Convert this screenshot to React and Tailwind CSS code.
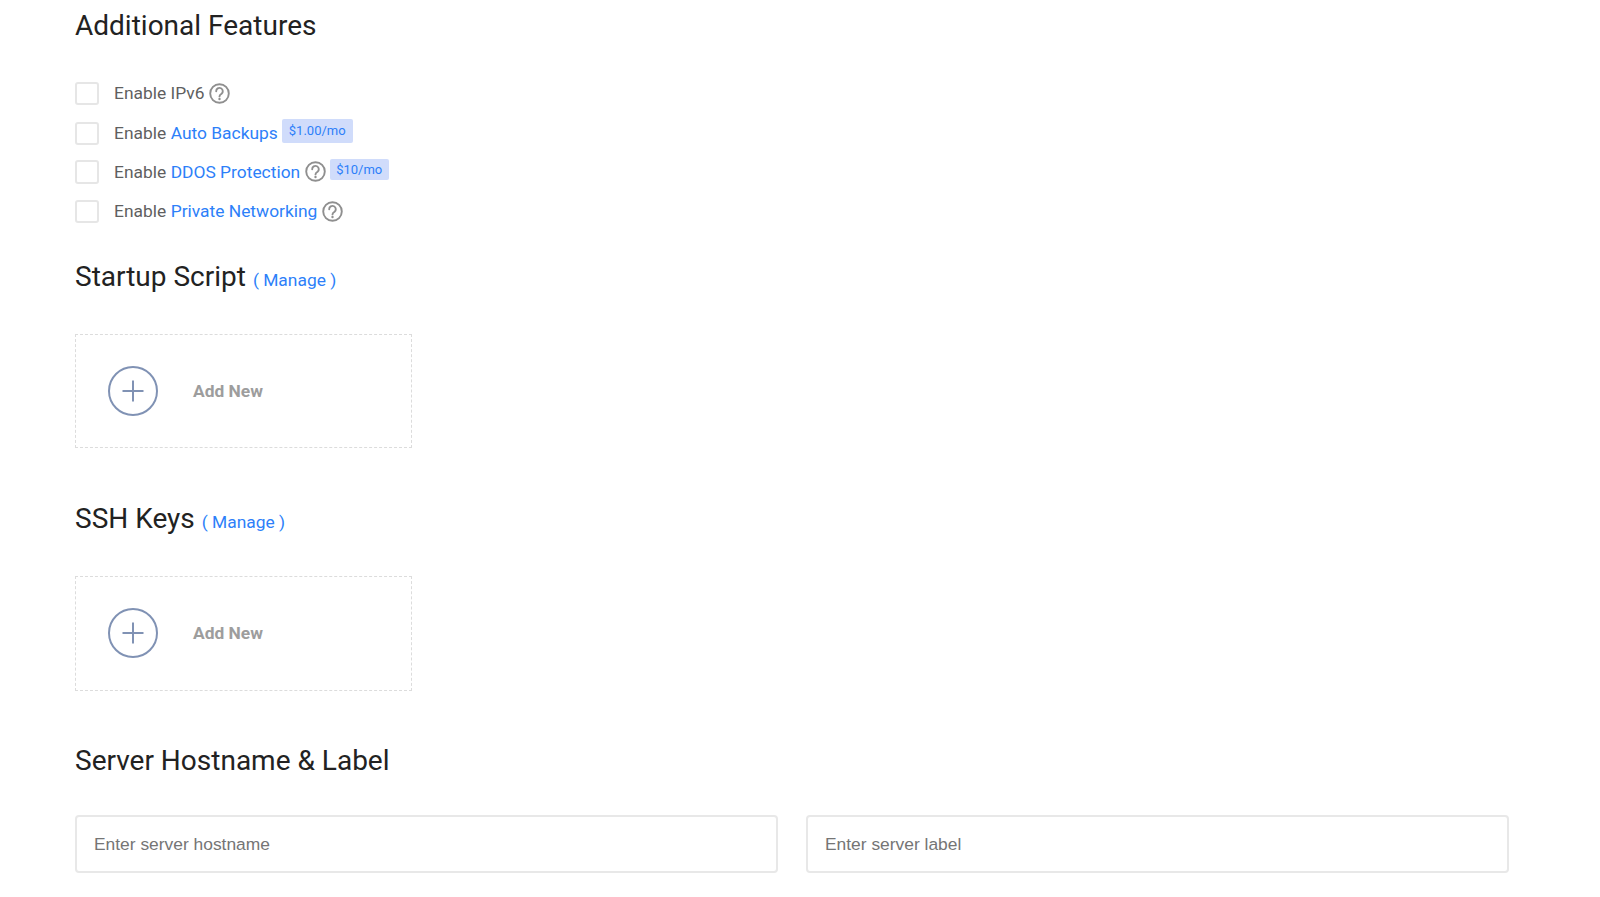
const Help = () => (
  <svg width="21" height="21" viewBox="0 0 21 21" fill="none" className="-mt-px ml-[4.5px] shrink-0">
    <circle cx="10.5" cy="10.5" r="9.3" stroke="#8f8f8f" strokeWidth="1.9" />
    <path d="M7.2 8.3a3.3 3.3 0 1 1 5.2 2.6c-1.2.8-1.9 1.2-1.9 2.5" stroke="#8f8f8f" strokeWidth="1.9" strokeLinecap="round" />
    <circle cx="10.5" cy="16" r="1.2" fill="#8f8f8f" />
  </svg>
)

const Badge = ({ children, className }) => (
  <span className={'ml-[4px] flex items-center rounded-[2px] bg-[#d0dcfb] text-[13px] text-[#2d7ff9] ' + className}>{children}</span>
)

const Feature = ({ className, children }) => (
  <div className={'flex h-[23px] items-center ' + className}>
    <span className="mr-[15.5px] h-[23.5px] w-[23.5px] shrink-0 rounded-[3px] border-2 border-[#e6e6e6] bg-white" />
    <span className="flex items-center text-[17.4px] text-[#5f5f5f]">{children}</span>
  </div>
)

const Link = ({ children }) => <span className="ml-[4.5px] text-[#2d7ff9]">{children}</span>

const AddNew = ({ className, iconClass }) => (
  <div className={'flex w-[337px] items-center border border-dashed border-[#dcdcdc] pl-[32px] ' + className}>
    <svg width="50" height="50" viewBox="0 0 50 50" fill="none" className={'shrink-0 ' + iconClass}>
      <circle cx="25" cy="25" r="24" stroke="#8092b4" strokeWidth="2" />
      <path d="M25 14.5v21M14.5 25h21" stroke="#8092b4" strokeWidth="2" />
    </svg>
    <span className="ml-[35px] text-[17.4px] font-bold text-[#9d9d9d]">Add New</span>
  </div>
)

export default function App() {
  return (
    <div className="h-[897px] overflow-hidden bg-white pl-[75px] pr-[91px] font-['Roboto',sans-serif]">
      <h2 className="h-[50px] text-[28px] leading-[52px] text-[#222]">Additional Features</h2>

      <div className="mt-[32px]">
        <Feature>
          Enable IPv6 <Help />
        </Feature>
        <Feature className="mt-[17px]">
          Enable <Link>Auto Backups</Link>
          <Badge className="-mt-[5px] h-[24px] px-[7px]">$1.00/mo</Badge>
        </Feature>
        <Feature className="mt-[15.5px]">
          Enable <Link>DDOS Protection</Link> <Help />
          <Badge className="-mt-[5px] h-[21px] px-[6.5px]">$10/mo</Badge>
        </Feature>
        <Feature className="mt-[16.5px]">
          Enable <Link>Private Networking</Link> <Help />
        </Feature>
      </div>

      <h2 className="mt-[34px] flex h-[40px] items-baseline text-[28px] leading-[40px] text-[#222]">
        Startup Script
        <span className="ml-[7px] text-[17.4px] text-[#2d7ff9]">( Manage )</span>
      </h2>
      <AddNew className="mt-[37px] h-[114px]" />

      <h2 className="mt-[51px] flex h-[40px] items-baseline text-[28px] leading-[40px] text-[#222]">
        SSH Keys
        <span className="ml-[7px] text-[17.4px] text-[#2d7ff9]">( Manage )</span>
      </h2>
      <AddNew className="mt-[37px] h-[115px]" iconClass="mb-[2px]" />

      <h2 className="mt-[50px] h-[40px] text-[28px] leading-[40px] text-[#222]">Server Hostname &amp; Label</h2>

      <div className="mt-[34px] grid grid-cols-2 gap-[28px]">
        <input
          placeholder="Enter server hostname"
          className="h-[58px] rounded-[4px] border-2 border-[#e8e8e8] px-[17px] font-['Liberation_Sans',sans-serif] text-[17.4px] placeholder:text-[#757575]"
        />
        <input
          placeholder="Enter server label"
          className="h-[58px] rounded-[4px] border-2 border-[#e8e8e8] px-[17px] font-['Liberation_Sans',sans-serif] text-[17.4px] placeholder:text-[#757575]"
        />
      </div>
    </div>
  )
}
